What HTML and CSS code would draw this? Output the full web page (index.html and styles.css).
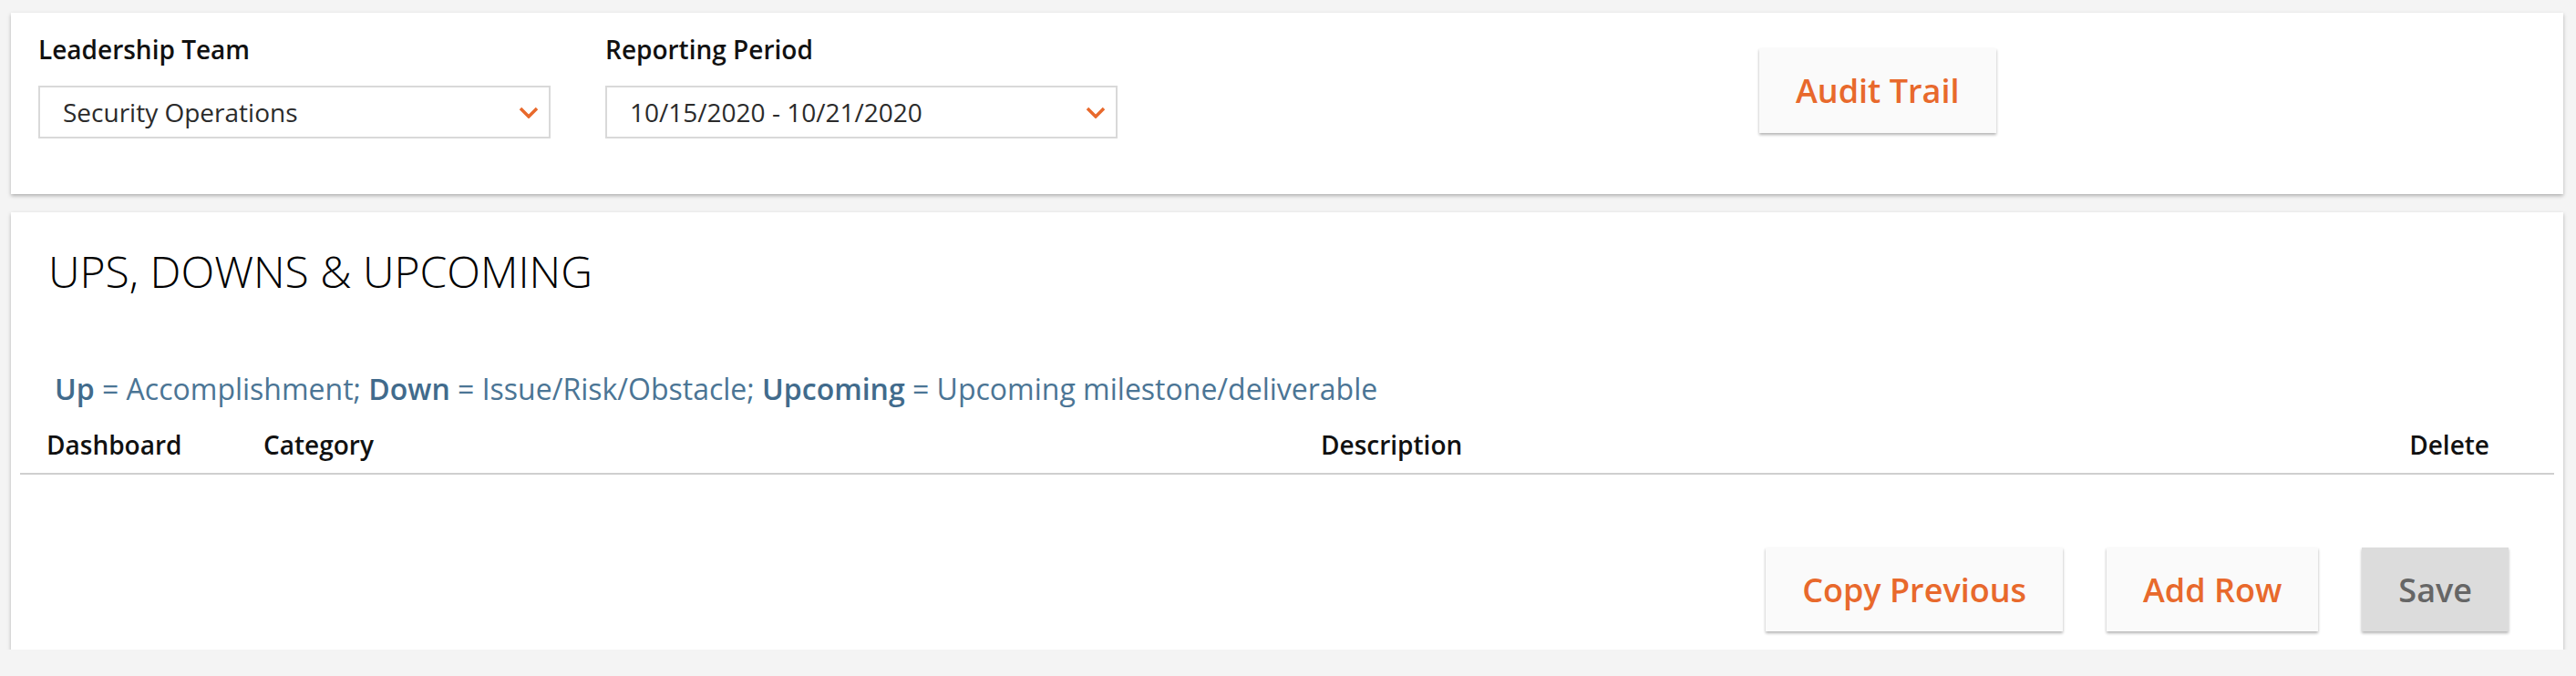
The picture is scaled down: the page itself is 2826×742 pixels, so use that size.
FILE: index.html
```html
<!DOCTYPE html>
<html lang="en">
<head>
<meta charset="utf-8">
<title>Ups, Downs &amp; Upcoming</title>
<link rel="stylesheet" href="styles.css">
</head>
<body>
<div class="page">
  <section class="card filters">
    <div class="field">
      <div class="label">Leadership Team</div>
      <div class="select">
        <span class="select-text">Security Operations</span>
        <svg class="chev" width="22" height="13" viewBox="0 0 22 13"><polyline points="2,2 11,11 20,2" fill="none" stroke="#e8692c" stroke-width="3.5"/></svg>
      </div>
    </div>
    <div class="field">
      <div class="label">Reporting Period</div>
      <div class="select">
        <span class="select-text">10/15/2020 - 10/21/2020</span>
        <svg class="chev" width="22" height="13" viewBox="0 0 22 13"><polyline points="2,2 11,11 20,2" fill="none" stroke="#e8692c" stroke-width="3.5"/></svg>
      </div>
    </div>
    <button class="btn audit">Audit Trail</button>
  </section>

  <section class="card udu">
    <h1 class="title">UPS, DOWNS &amp; UPCOMING</h1>
    <p class="legend"><b>Up</b> = Accomplishment; <b>Down</b> = Issue/Risk/Obstacle; <b>Upcoming</b> = Upcoming milestone/deliverable</p>
    <div class="thead">
      <div class="th">Dashboard</div>
      <div class="th">Category</div>
      <div class="th">Description</div>
      <div class="th">Delete</div>
    </div>
    <div class="actions">
      <button class="btn">Copy Previous</button>
      <button class="btn">Add Row</button>
      <button class="btn save">Save</button>
    </div>
  </section>
</div>
</body>
</html>
```

FILE: styles.css
```css
* { box-sizing: border-box; }
html, body {
  margin: 0;
  padding: 0;
  background: #f4f4f4;
  font-family: "Open Sans", "Liberation Sans", sans-serif;
}
.page {
  padding: 14px 14px 0 12px;
  display: flex;
  flex-direction: column;
  gap: 20px;
}
.card {
  background: #ffffff;
  box-shadow: 0 2px 4px rgba(0, 0, 0, 0.28);
}
.filters {
  height: 199px;
  display: flex;
  align-items: flex-start;
  gap: 60px;
  padding: 21px 0 0 30px;
}
.field {
  width: 562px;
  display: flex;
  flex-direction: column;
  gap: 21px;
}
.label {
  font-size: 28px;
  line-height: 38px;
  font-weight: 600;
  color: #111;
}
.select {
  height: 58px;
  border: 2px solid #d9d9d9;
  display: flex;
  align-items: center;
  justify-content: space-between;
  padding: 0 11px 0 25px;
  background: #fff;
}
.select-text {
  font-size: 28px;
  line-height: 38px;
  color: #2b2b2b;
}
.chev { display: block; }
.btn {
  font-family: "Open Sans", "Liberation Sans", sans-serif;
  font-size: 36px;
  font-weight: 600;
  color: #e8692c;
  background: #fafafa;
  border: none;
  height: 92px;
  padding: 0 40px;
  box-shadow: 0 2px 3px rgba(0, 0, 0, 0.3);
  cursor: pointer;
}
.audit {
  margin-left: 644px;
  margin-top: 18px;
  height: 93px;
}
.udu {
  height: 480px;
  padding: 33px 10px 0 10px;
  display: flex;
  flex-direction: column;
}
.title {
  margin: 0;
  padding-left: 31px;
  font-size: 48px;
  line-height: 64px;
  font-weight: 300;
  color: #000;
}
.legend {
  margin: 76px 0 0;
  padding-left: 38px;
  font-size: 32px;
  line-height: 42px;
  color: #4b7595;
}
.legend b { font-weight: 600; color: #416b8c; }
.thead {
  margin-top: 21px;
  display: grid;
  grid-template-columns: 238px 1160px 1fr auto;
  padding: 0 71px 12px 29px;
  border-bottom: 2px solid #cfcfcf;
}
.th {
  font-size: 28px;
  line-height: 38px;
  font-weight: 600;
  color: #111;
}
.actions {
  margin-top: 80px;
  display: flex;
  justify-content: flex-end;
  gap: 48px;
  padding-right: 50px;
}
.save {
  background: #dcdcdc;
  color: #666;
}
```
